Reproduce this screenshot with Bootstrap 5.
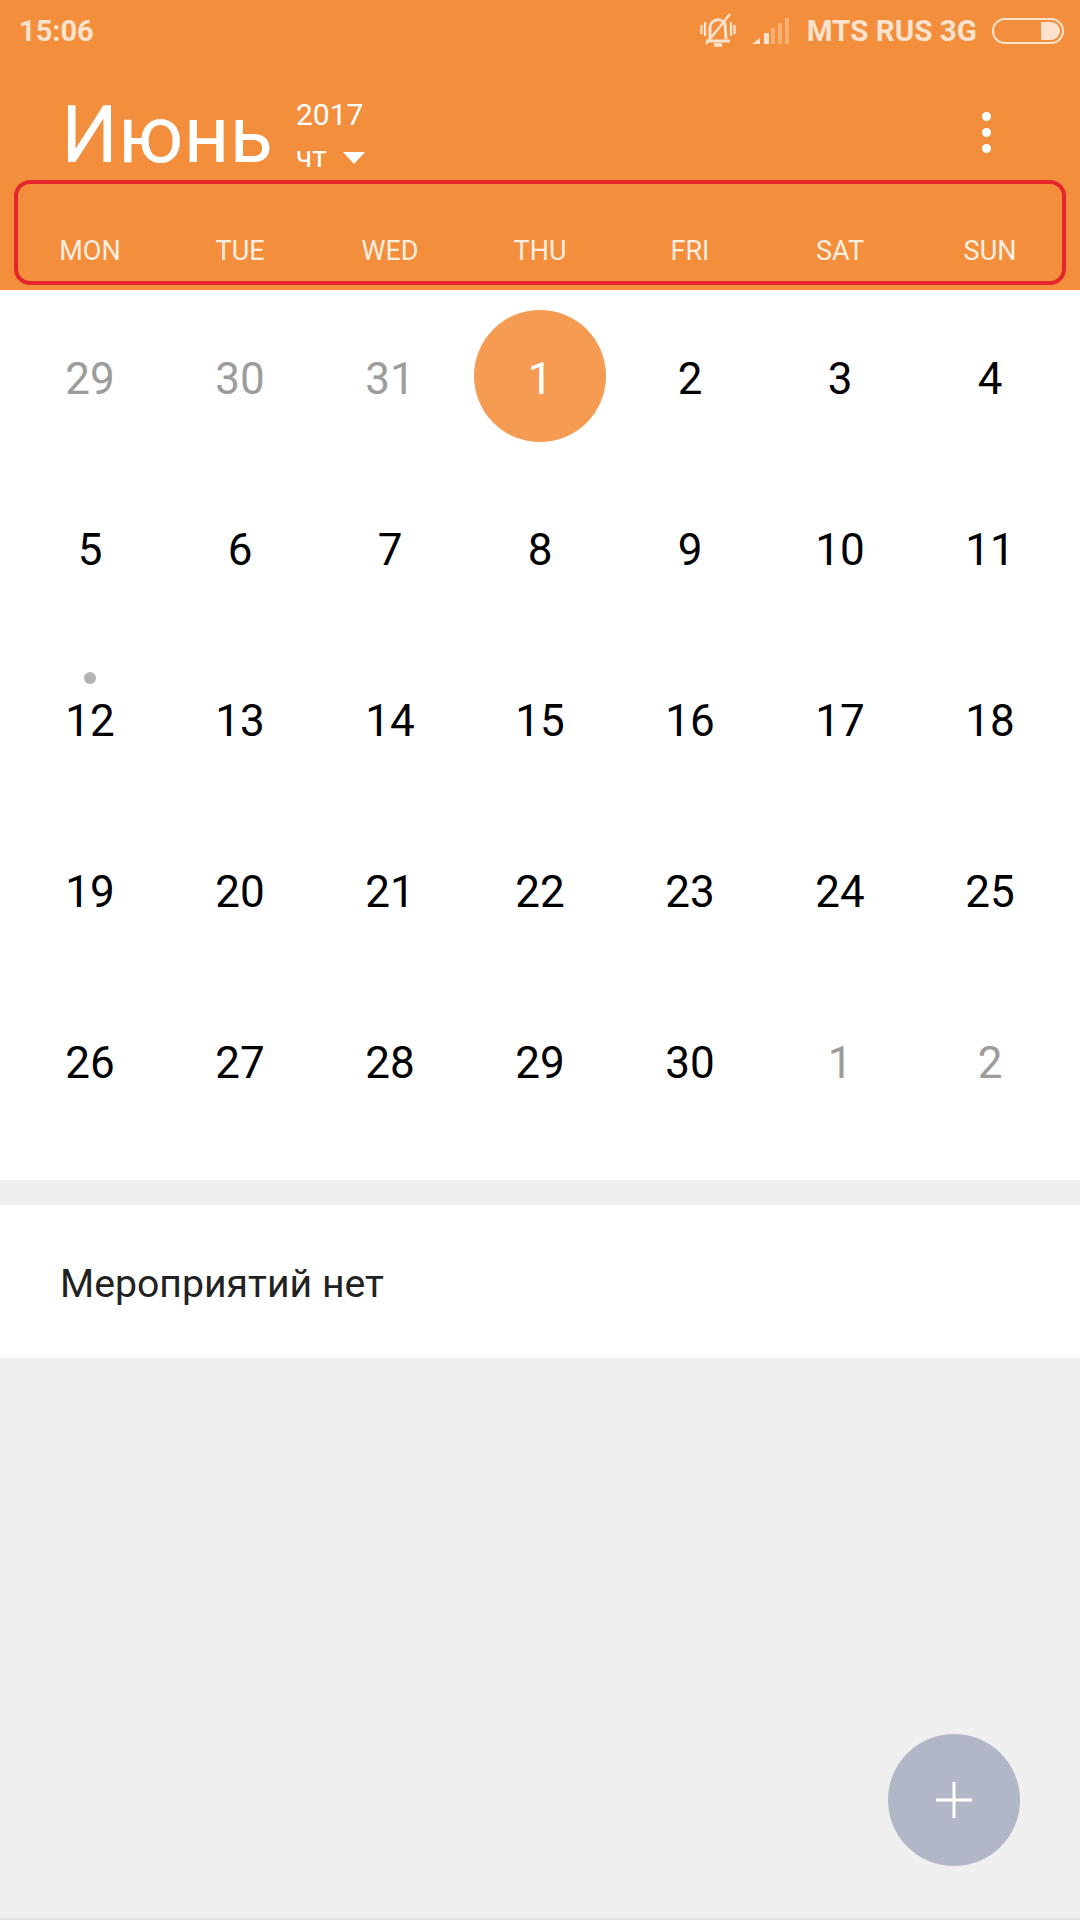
<!DOCTYPE html>
<html lang="ru">
<head>
    <meta charset="UTF-8">
    <meta name="viewport" content="width=device-width, initial-scale=1">
    <title>Календарь</title>
    <link href="https://cdn.jsdelivr.net/npm/bootstrap@5.3.0/dist/css/bootstrap.min.css" rel="stylesheet">
    <style>
        body { font-family: Roboto, "Liberation Sans", sans-serif; background: #efefef; width: 1080px; height: 1920px; overflow: hidden; }
        .app-screen { height: 1920px; position: relative; border-bottom: 2px solid #e2e2e2; }
        .app-head { background: #f38e3d; height: 290px; color: #fff; }
        .status-bar { height: 62px; padding: 0 16px 0 19px; color: #fde3cd; font-size: 29px; font-weight: 700; line-height: 62px; }
        .carrier { margin-left: 17px; margin-right: 15px; font-size: 29.6px; }
        .battery { width: 72px; height: 26px; border: 2px solid #fde3cd; border-radius: 13px; padding: 2px; display: flex; justify-content: flex-end; }
        .battery span { width: 19px; background: #fde3cd; border-radius: 0 9px 9px 0; }
        .title-row { height: 118px; padding-left: 61px; padding-right: 0; }
        .month-name { font-size: 80px; font-weight: 400; line-height: 100px; margin: 0; padding-top: 23px; }
        .year-box { margin-left: 23px; font-size: 30px; line-height: 42px; padding-top: 32px; }
        .caret-down { display: inline-block; border-left: 11px solid transparent; border-right: 11px solid transparent; border-top: 12px solid #fff; margin-left: 16px; vertical-align: 3px; }
        .more-dots { position: absolute; left: 982px; top: 112px; display: flex; flex-direction: column; gap: 7px; }
        .more-dots i { width: 9px; height: 9px; border-radius: 50%; background: #fff; }
        .week-frame { position: absolute; left: 14px; top: 180px; width: 1052px; height: 105px; border: 4px solid #e4252a; border-radius: 16px; }
        .week-row { position: absolute; left: 15px; top: 231px; width: 1050px; display: grid; grid-template-columns: repeat(7, 150px); text-align: center; font-size: 27px; line-height: 40px; color: #fdeee0; }
        .month-grid { background: #fff; height: 890px; padding: 4px 15px 0; display: grid; grid-template-columns: repeat(7, 150px); grid-auto-rows: 171px; align-content: start; text-align: center; }
        .day-cell { font-size: 44px; color: #000; line-height: 171px; position: relative; }
        .day-cell.faded { color: #9c9c9c; }
        .day-cell.today { color: #fff; }
        .today-disc { position: absolute; left: 9px; top: 16px; width: 132px; height: 132px; border-radius: 50%; background: #f59c52; }
        .today-num { position: relative; }
        .event-dot { position: absolute; left: 69px; top: 36px; width: 12px; height: 12px; border-radius: 50%; background: #b3b3b3; }
        .no-events { background: #fff; margin-top: 25px; height: 153px; padding-left: 60px; font-size: 39.2px; line-height: 158px; color: #222; }
        .add-btn { position: absolute; left: 888px; top: 1734px; width: 132px; height: 132px; border-radius: 50%; background: #b1b7c7; border: 0; padding: 0; }
    </style>
</head>
<body>
    <div class="app-screen">
        <div class="app-head">
            <div class="status-bar d-flex align-items-center">
                <span>15:06</span>
                <span class="ms-auto d-flex align-items-center">
                    <svg width="36" height="36" viewBox="0 0 36 36" fill="none" stroke="#fde3cd" stroke-width="3">
                        <path d="M10 26V15a8 8 0 0 1 15-4l1 15M6 28h24" />
                        <path d="M14 32h8" stroke-width="3.5"/>
                        <path d="M1.5 12v9M5 9v14M31 9v14M34.5 12v9" stroke-width="2.2"/>
                        <path d="M6 31 30 1" stroke-width="2.4"/>
                    </svg>
                    <svg class="ms-3" width="38" height="26" viewBox="0 0 38 26">
                        <path d="M0 26 8 20v6z" fill="#fde3cd"/>
                        <path d="M12 15h5v11h-5z" fill="#fde3cd"/>
                        <path d="M19 10h4v16h-4zM26 5h4v21h-4zM33 0h4v26h-4z" fill="#f9ae72"/>
                    </svg>
                    <span class="carrier">MTS RUS 3G</span>
                    <span class="battery"><span></span></span>
                </span>
            </div>
            <div class="title-row d-flex align-items-start">
                <h1 class="month-name">Июнь</h1>
                <div class="year-box">
                    <div>2017</div>
                    <div>чт<span class="caret-down"></span></div>
                </div>
            </div>
            <div class="more-dots"><i></i><i></i><i></i></div>
            <div class="week-frame"></div>
            <div class="week-row">
                <span>MON</span><span>TUE</span><span>WED</span><span>THU</span><span>FRI</span><span>SAT</span><span>SUN</span>
            </div>
        </div>

        <div class="month-grid" id="monthGrid"></div>

        <div class="no-events">Мероприятий нет</div>

        <button class="add-btn" type="button" aria-label="Добавить">
            <svg width="36" height="36" viewBox="0 0 36 36"><path d="M18 0v36M0 18h36" stroke="#fff" stroke-width="3"/></svg>
        </button>
    </div>

    <script>
        // июнь 2017, неделя с понедельника
        let days = [];
        [29, 30, 31].forEach(d => days.push({ n: d, faded: true }));
        for (let d = 1; d <= 30; d++) days.push({ n: d });
        [1, 2].forEach(d => days.push({ n: d, faded: true }));

        let grid = document.getElementById("monthGrid");
        days.forEach(day => {
            let cls = "day-cell";
            if (day.faded) cls += " faded";
            let isToday = day.n === 1 && !day.faded;
            if (isToday) cls += " today";
            let inner = `<span class="today-num">${day.n}</span>`;
            if (isToday) inner = `<span class="today-disc"></span>` + inner;
            if (day.n === 12) inner = `<span class="event-dot"></span>` + inner;
            grid.innerHTML += `<div class="${cls}">${inner}</div>`;
        });
    </script>
    <script src="https://cdn.jsdelivr.net/npm/bootstrap@5.3.0/dist/js/bootstrap.bundle.min.js"></script>
</body>
</html>
